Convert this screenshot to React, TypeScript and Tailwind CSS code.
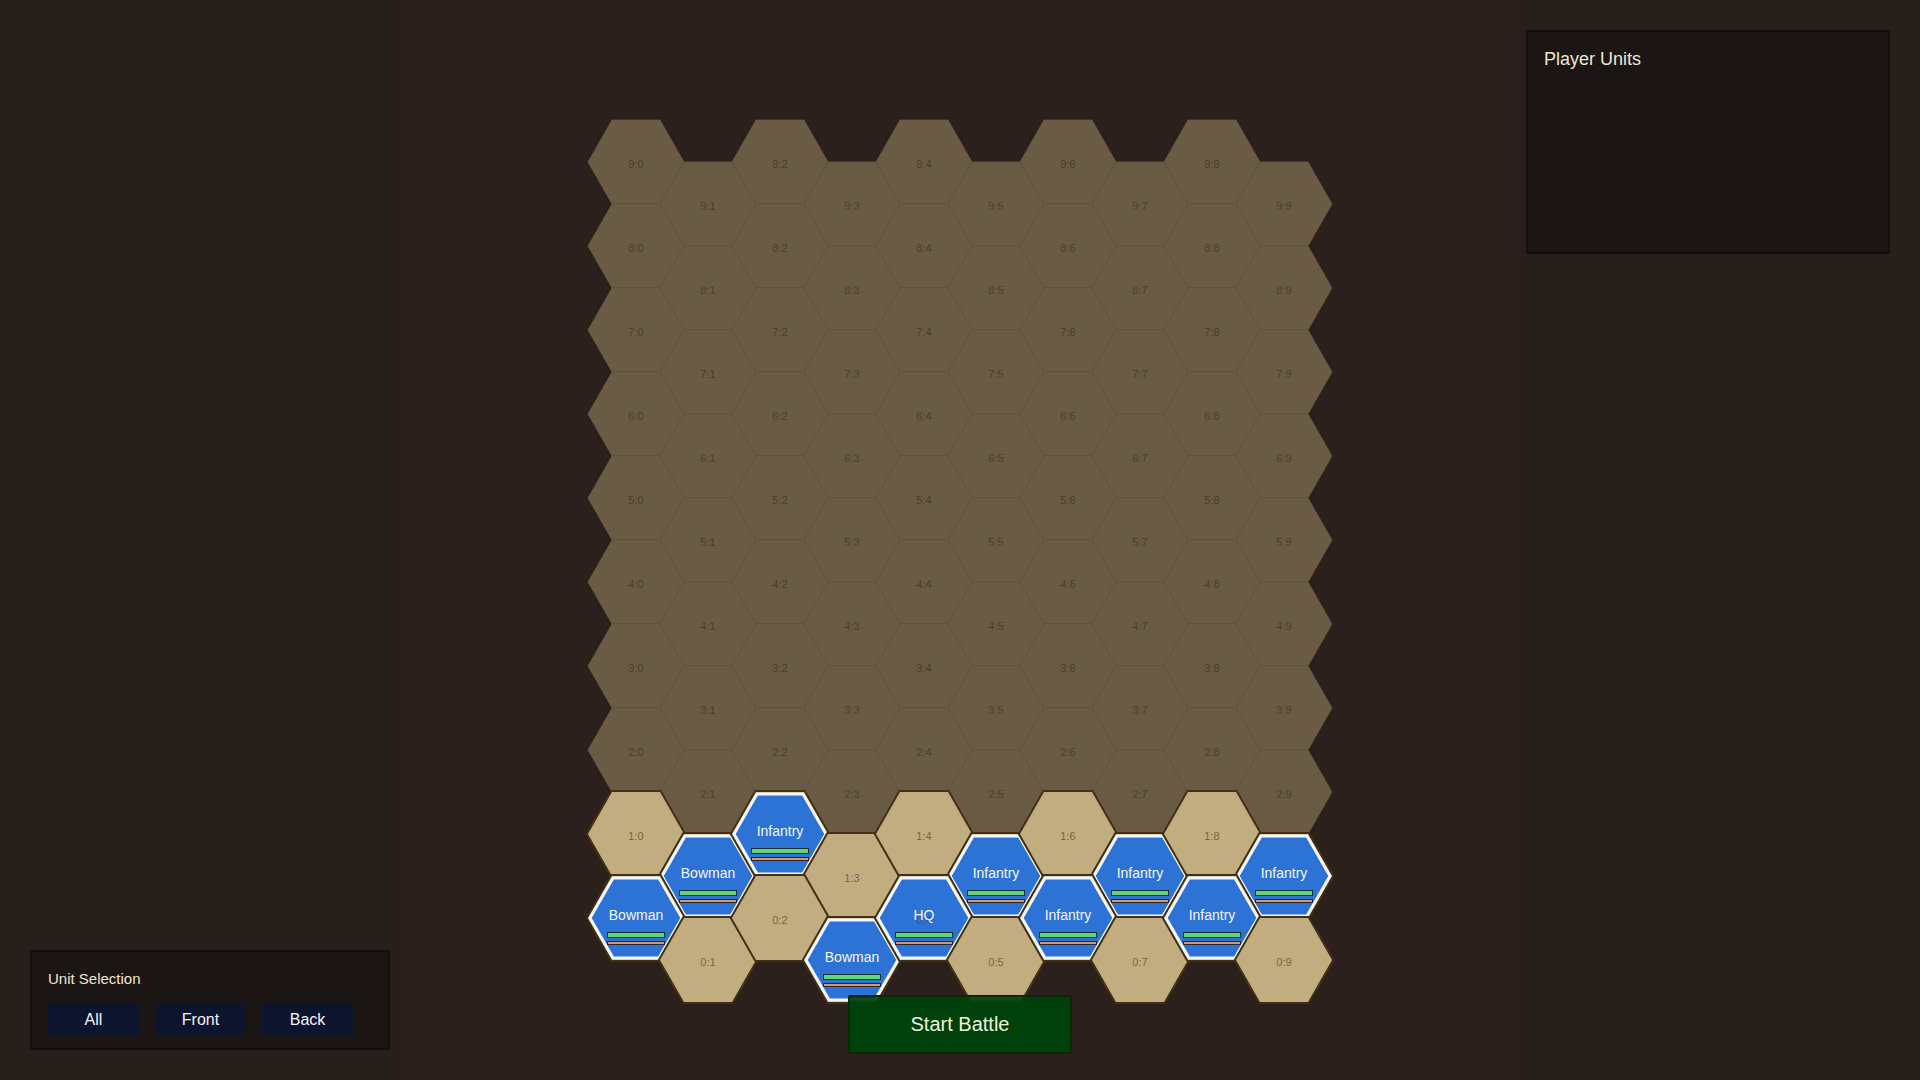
const COLS = 10;
const ROWS = 10;
const TILE_H = 84;
const COL_STEP = 72;
const HEX = "24,0 72,0 96,42 72,84 24,84 0,42";
const UNIT_HEX = "25,2 71,2 94,42 71,82 25,82 2,42";

const UNITS: Record<string, string> = {
  "1:1": "Bowman",
  "1:2": "Infantry",
  "1:5": "Infantry",
  "1:7": "Infantry",
  "1:9": "Infantry",
  "0:0": "Bowman",
  "0:3": "Bowman",
  "0:4": "HQ",
  "0:6": "Infantry",
  "0:8": "Infantry",
};

function Unit() {
  return (
    <g>
      <polygon points={UNIT_HEX} className="fill-[#2d72d5] stroke-[#f4f8fb]" strokeWidth="3" />
      <rect x="19.5" y="56.5" width="57" height="5" className="fill-[#5fd67c] stroke-[#17302f]" />
      <rect x="19.5" y="65.5" width="57" height="3" className="fill-[#d29a68] stroke-[#2c2430]" />
    </g>
  );
}

function Tile({ row, col }: { row: number; col: number }) {
  const id = `${row}:${col}`;
  const name = UNITS[id];
  const deployable = row < 2;
  const x = col * COL_STEP;
  const y = (ROWS - 1 - row) * TILE_H + (col % 2) * (TILE_H / 2);
  return (
    <g transform={`translate(${x} ${y})`}>
      <polygon
        points={HEX}
        paintOrder="stroke"
        className={deployable ? "fill-[#c2ad80] stroke-[#442f14]" : "fill-[#6a5b44] stroke-[#5b4b36]"}
        strokeWidth={deployable ? 4 : 1}
      />
      {name && <Unit />}
      {(!name || name === "HQ") && (
        <text
          x="48"
          y="48"
          textAnchor="middle"
          className={
            name
              ? "fill-[#474a8c] text-[11px]"
              : deployable
                ? "fill-[#786547] text-[11px]"
                : "fill-[#4b3d2b] text-[11px]"
          }
        >
          {id}
        </text>
      )}
      {name && (
        <text x="48" y="44" textAnchor="middle" className="fill-[#f4f7fc] text-[14px]">
          {name}
        </text>
      )}
    </g>
  );
}

function Board() {
  const tiles = [];
  for (let row = ROWS - 1; row >= 0; row--) {
    for (let col = 0; col < COLS; col++) {
      tiles.push(<Tile key={`${row}:${col}`} row={row} col={col} />);
    }
  }
  return (
    <svg width="744" height="882" className="shrink-0 overflow-visible" role="img" aria-label="Battlefield">
      {tiles}
    </svg>
  );
}

export default function App() {
  return (
    <div className="grid min-h-screen grid-cols-[400px_1fr_400px] bg-[#2c201c] font-['Liberation_Sans',Arial,sans-serif]">
      <aside className="flex flex-col justify-end bg-[#25201a] pt-8 pr-[10px] pb-[30px] pl-[30px]">
        <section className="rounded-xs border-2 border-[#130e0c] bg-[#1b1514] px-4 pt-[17px] pb-[13px]">
          <h2 className="text-[15px] leading-5 text-[#efe6cf]">Unit Selection</h2>
          <div className="mt-[15px] flex gap-4">
            {["All", "Front", "Back"].map((label) => (
              <button key={label} type="button" className="h-[31px] w-[91px] bg-[#0d152e] text-base leading-[31px] text-[#f1f3f8]">
                {label}
              </button>
            ))}
          </div>
        </section>
      </aside>

      <main className="relative flex justify-center pt-[120px]">
        <Board />
        <button
          type="button"
          className="absolute bottom-[26px] left-1/2 h-[59px] w-[224px] -translate-x-1/2 rounded-xs border-2 border-[#0a240a]/85 bg-[linear-gradient(to_bottom,#00400ae0,#00400a_6px)] pb-[2px] text-xl text-[#eef2dc]"
        >
          Start Battle
        </button>
      </main>

      <aside className="bg-[#25201a] pt-[30px] pr-[30px] pb-8 pl-[6px]">
        <section className="min-h-[224px] rounded-xs border-2 border-[#130e0c] bg-[#1b1514] px-4 py-[15px]">
          <h2 className="text-lg leading-6 text-[#efe6cf]">Player Units</h2>
        </section>
      </aside>
    </div>
  );
}
